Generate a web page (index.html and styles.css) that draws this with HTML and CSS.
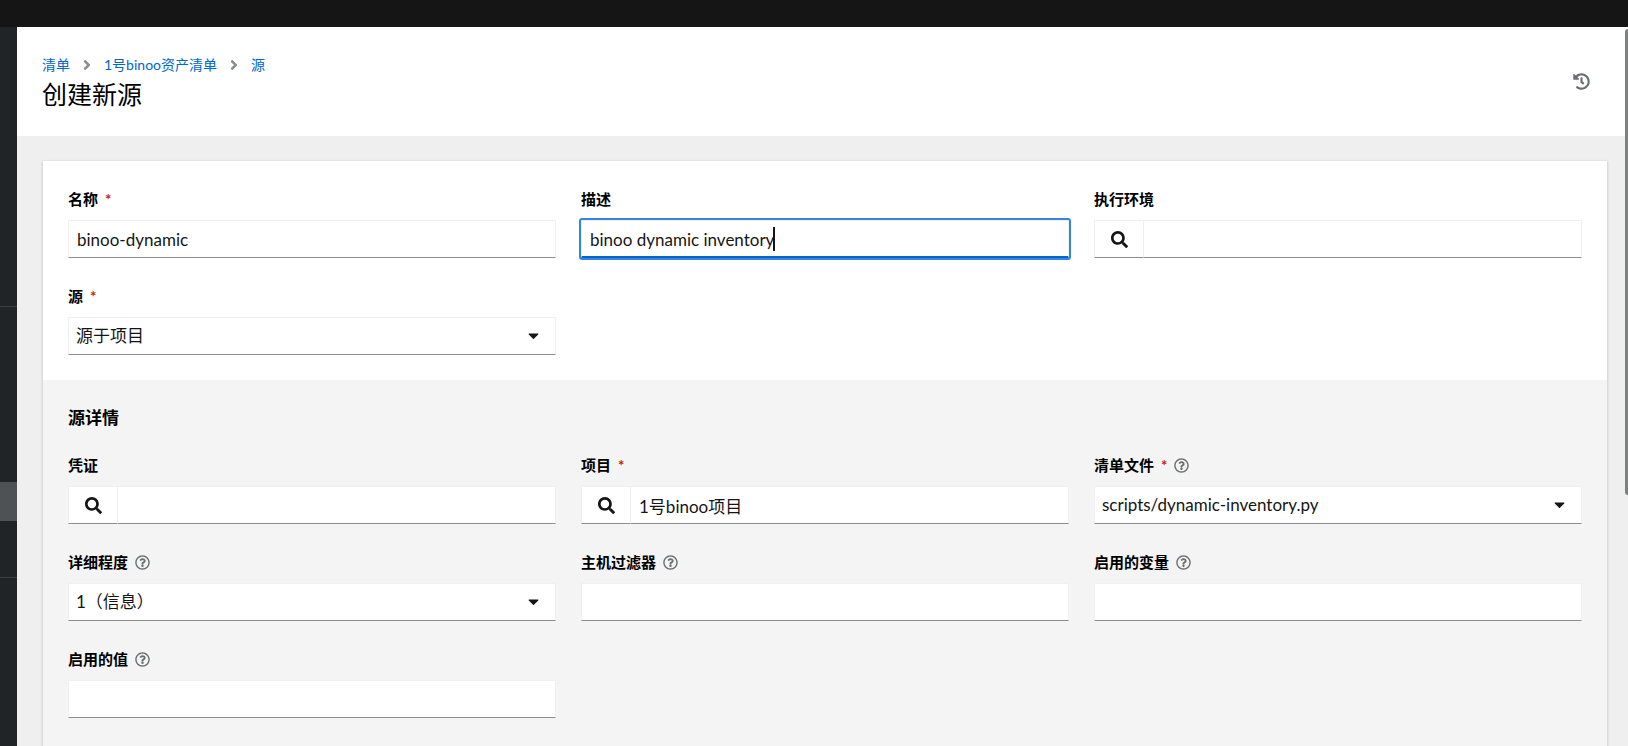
FILE: index.html
```
<!DOCTYPE html>
<html lang="zh-CN">
<head>
<meta charset="utf-8">
<title>创建新源</title>
<link rel="stylesheet" href="styles.css">
</head>
<body>
<svg class="sprite" aria-hidden="true">
  <symbol id="search" viewBox="0 0 512 512"><path d="M505 442.7L405.3 343c-4.5-4.5-10.6-7-17-7H372c27.6-35.3 44-79.7 44-128C416 93.1 322.9 0 208 0S0 93.1 0 208s93.1 208 208 208c48.3 0 92.7-16.4 128-44v16.3c0 6.4 2.5 12.5 7 17l99.7 99.7c9.4 9.4 24.6 9.4 33.9 0l28.3-28.3c9.4-9.4 9.4-24.6.1-34zM208 336c-70.7 0-128-57.2-128-128 0-70.7 57.2-128 128-128 70.7 0 128 57.2 128 128 0 70.7-57.2 128-128 128z"/></symbol>
  <symbol id="history" viewBox="0 0 512 512"><path d="M504 255.531c.253 136.64-111.18 248.372-247.82 248.468-59.015.042-113.223-20.53-155.822-54.911-11.077-8.94-11.905-25.541-1.839-35.607l11.267-11.267c8.609-8.609 22.353-9.551 31.891-1.984C173.062 425.135 212.781 440 256 440c101.705 0 184-82.311 184-184 0-101.705-82.311-184-184-184-48.814 0-93.149 18.969-126.068 49.932l50.754 50.754c10.08 10.08 2.941 27.314-11.313 27.314H24c-8.837 0-16-7.163-16-16V38.627c0-14.254 17.234-21.393 27.314-11.314l49.372 49.372C129.209 34.136 189.552 8 256 8c136.81 0 247.747 110.78 248 247.531zm-180.912 78.784l9.823-12.63c8.138-10.463 6.253-25.542-4.21-33.679L288 256.349V152c0-13.255-10.745-24-24-24h-16c-13.255 0-24 10.745-24 24v135.651l65.409 50.874c10.463 8.137 25.541 6.253 33.679-4.21z"/></symbol>
  <symbol id="angle" viewBox="0 0 256 512"><path d="M224.3 273l-136 136c-9.4 9.4-24.6 9.4-33.9 0l-22.6-22.6c-9.4-9.4-9.4-24.6 0-33.9l96.4-96.4-96.4-96.4c-9.4-9.4-9.4-24.6 0-33.9L54.3 103c9.4-9.4 24.6-9.4 33.9 0l136 136c9.5 9.4 9.5 24.6.1 34z"/></symbol>
  <symbol id="caret" viewBox="0 0 320 512"><path d="M31.3 192h257.3c17.8 0 26.7 21.5 14.1 34.1L174.1 354.8c-7.8 7.8-20.5 7.8-28.3 0L17.2 226.1C4.6 213.5 13.5 192 31.3 192z"/></symbol>
  <symbol id="help" viewBox="0 0 512 512"><path d="M256 8C119.043 8 8 119.083 8 256c0 136.997 111.043 248 248 248s248-111.003 248-248C504 119.083 392.957 8 256 8zm0 448c-110.532 0-200-89.431-200-200 0-110.495 89.472-200 200-200 110.491 0 200 89.471 200 200 0 110.53-89.431 200-200 200zm107.244-255.2c0 67.052-72.421 68.084-72.421 92.863V300c0 6.627-5.373 12-12 12h-45.647c-6.627 0-12-5.373-12-12v-8.659c0-35.745 27.1-50.034 47.579-61.516 17.561-9.845 28.324-16.541 28.324-29.579 0-17.246-21.999-28.693-39.784-28.693-23.189 0-33.894 10.977-48.942 29.969-4.057 5.12-11.46 6.071-16.666 2.124l-27.824-21.098c-5.107-3.872-6.251-11.066-2.644-16.363C184.846 131.491 214.94 112 261.794 112c49.071 0 101.45 38.304 101.45 88.8zM298 368c0 23.159-18.841 42-42 42s-42-18.841-42-42 18.841-42 42-42 42 18.841 42 42z"/></symbol>
</svg>
<div class="page">
  <header class="masthead"></header>
  <nav class="sidebar" aria-label="导航">
    <div class="nav-group"></div>
    <div class="nav-group nav-group-current"><div class="nav-current"></div></div>
  </nav>
  <main class="main">
    <section class="page-header">
      <div>
        <nav class="breadcrumb" aria-label="路径">
          <a href="#">清单</a>
          <svg class="angle"><use href="#angle"/></svg>
          <a href="#">1号binoo资产清单</a>
          <svg class="angle"><use href="#angle"/></svg>
          <a href="#">源</a>
        </nav>
        <h1 class="title">创建新源</h1>
      </div>
      <button class="history" type="button" aria-label="活动流"><svg class="history-icon"><use href="#history"/></svg></button>
    </section>
    <section class="content">
      <form class="card">
        <div class="form-grid">
          <div class="field">
            <div class="label-row"><label for="name">名称</label><span class="required">*</span></div>
            <input class="control" id="name" type="text" value="binoo-dynamic">
          </div>
          <div class="field">
            <div class="label-row"><label for="desc">描述</label></div>
            <div class="control-wrap">
              <input class="control control-active" id="desc" type="text" value="binoo dynamic inventory">
              <span class="text-cursor"></span>
            </div>
          </div>
          <div class="field">
            <div class="label-row"><label for="env">执行环境</label></div>
            <div class="lookup">
              <button class="lookup-button" type="button" aria-label="搜索"><svg class="search-icon"><use href="#search"/></svg></button>
              <input class="control" id="env" type="text">
            </div>
          </div>
          <div class="field">
            <div class="label-row"><label for="source">源</label><span class="required">*</span></div>
            <div class="control-wrap">
              <select class="control" id="source"><option>源于项目</option></select>
              <svg class="caret"><use href="#caret"/></svg>
            </div>
          </div>
        </div>
        <div class="details">
          <h2 class="subtitle">源详情</h2>
          <div class="form-grid form-grid-flush">
            <div class="field">
              <div class="label-row"><label for="cred">凭证</label></div>
              <div class="lookup">
                <button class="lookup-button" type="button" aria-label="搜索"><svg class="search-icon"><use href="#search"/></svg></button>
                <input class="control" id="cred" type="text">
              </div>
            </div>
            <div class="field">
              <div class="label-row"><label for="project">项目</label><span class="required">*</span></div>
              <div class="lookup">
                <button class="lookup-button" type="button" aria-label="搜索"><svg class="search-icon"><use href="#search"/></svg></button>
                <input class="control" id="project" type="text" value="1号binoo项目">
              </div>
            </div>
            <div class="field">
              <div class="label-row"><label for="file">清单文件</label><span class="required">*</span><button class="help" type="button" aria-label="帮助"><svg class="help-icon"><use href="#help"/></svg></button></div>
              <div class="control-wrap">
                <select class="control" id="file"><option>scripts/dynamic-inventory.py</option></select>
                <svg class="caret"><use href="#caret"/></svg>
              </div>
            </div>
            <div class="field">
              <div class="label-row"><label for="verbosity">详细程度</label><button class="help" type="button" aria-label="帮助"><svg class="help-icon"><use href="#help"/></svg></button></div>
              <div class="control-wrap">
                <select class="control" id="verbosity"><option>1（信息）</option></select>
                <svg class="caret"><use href="#caret"/></svg>
              </div>
            </div>
            <div class="field">
              <div class="label-row"><label for="filter">主机过滤器</label><button class="help" type="button" aria-label="帮助"><svg class="help-icon"><use href="#help"/></svg></button></div>
              <input class="control" id="filter" type="text">
            </div>
            <div class="field">
              <div class="label-row"><label for="variable">启用的变量</label><button class="help" type="button" aria-label="帮助"><svg class="help-icon"><use href="#help"/></svg></button></div>
              <input class="control" id="variable" type="text">
            </div>
            <div class="field">
              <div class="label-row"><label for="value">启用的值</label><button class="help" type="button" aria-label="帮助"><svg class="help-icon"><use href="#help"/></svg></button></div>
              <input class="control" id="value" type="text">
            </div>
          </div>
        </div>
      </form>
    </section>
    <div class="scroll-thumb"></div>
  </main>
</div>
</body>
</html>
```
FILE: styles.css
```
* { box-sizing: border-box; }

body {
  margin: 0;
  overflow: hidden;
  color: #151515;
  font-family: Lato, "Noto Sans CJK SC", sans-serif;
  font-size: 17px;
}

button, input, select { font: inherit; color: inherit; }
button { padding: 0; border: 0; background: none; }
svg { display: block; fill: currentColor; }
.sprite { display: none; }

.page {
  display: grid;
  grid-template: 27px 1fr / 17px 1fr;
  height: 100vh;
}
.masthead { grid-column: 1 / -1; background: #151515; }

.sidebar { background: #212427; overflow: hidden; }
.nav-group { height: 280px; border-bottom: 1px solid #3c3f42; }
.nav-group-current { height: 271px; padding-top: 175px; }
.nav-current { height: 39px; background: #4f5255; }

.main {
  position: relative;
  display: flex;
  flex-direction: column;
  min-width: 0;
  overflow: hidden;
  background: #efefef;
}

.page-header {
  display: flex;
  justify-content: space-between;
  align-items: center;
  padding: 25px 38px 25px 25px;
  background: #fff;
}
.breadcrumb {
  display: flex;
  align-items: center;
  font-size: 14px;
  line-height: 26px;
}
.breadcrumb a { color: #06c; text-decoration: none; }
.angle { width: 8px; height: 16px; margin: 0 13px; color: #8a8d90; }
.title { margin: 0; color: #000; font-size: 25px; font-weight: 400; line-height: 33px; }
.history { color: #6a6e73; }
.history-icon { width: 17px; height: 17px; }

.content { display: flex; flex: 1; padding: 25px 21px 0 26px; }
.card {
  display: flex;
  flex: 1;
  flex-direction: column;
  min-width: 0;
  background: #fff;
  box-shadow: 0 1px 2px 1px rgba(3, 3, 3, 0.12);
}
.form-grid {
  display: grid;
  grid-template-columns: repeat(3, minmax(0, 1fr));
  gap: 25px;
  padding: 25px;
}
.form-grid-flush { padding: 0; }
.details { flex: 1; padding: 25px; background: #f4f4f4; }
.subtitle { margin: 0 0 21px; color: #000; font-size: 17px; font-weight: 700; line-height: 26px; }

.label-row {
  display: flex;
  align-items: center;
  gap: 7px;
  height: 26px;
  margin-bottom: 8px;
  color: #000;
  font-size: 15px;
  font-weight: 700;
  line-height: 26px;
}
.required { color: #c9190b; }
.help { color: #6a6e73; }
.help-icon { width: 15px; height: 15px; }

.control {
  display: block;
  width: 100%;
  height: 38px;
  padding: 0 8px;
  border: 1px solid #f0f0f0;
  border-bottom-color: #8a8d90;
  border-radius: 0;
  outline: 0;
  background: #fff;
  line-height: 26px;
  appearance: none;
}
.control-wrap { position: relative; }
select.control { padding: 0 40px 0 7px; }
.control-active {
  padding-top: 1px;
  border-bottom: 2px solid #06c;
  border-radius: 1px;
  outline: 2px solid #3584e4;
}
.text-cursor {
  position: absolute;
  top: 7px;
  left: 192px;
  width: 2px;
  height: 24px;
  background: #151515;
}
.caret {
  position: absolute;
  top: 10px;
  right: 17px;
  width: 11px;
  height: 17px;
  pointer-events: none;
}
.lookup { display: flex; }
.lookup-button {
  display: grid;
  flex: none;
  place-items: center;
  width: 49px;
  height: 38px;
  border: 1px solid #f0f0f0;
  border-right: 0;
  border-bottom-color: #8a8d90;
  background: #fff;
}
.search-icon { width: 17px; height: 17px; }
.scroll-thumb {
  position: absolute;
  top: 2px;
  right: 0;
  width: 3px;
  height: 466px;
  border-radius: 3px 0 0 3px;
  background: #7d817f;
}
```
